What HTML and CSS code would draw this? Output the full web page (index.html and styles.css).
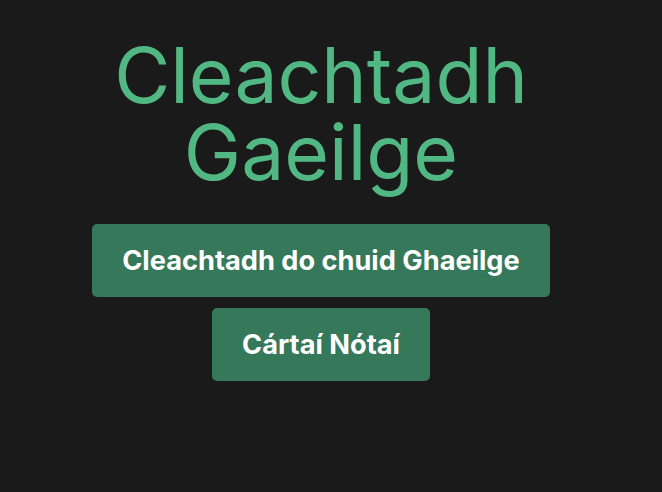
FILE: index.html
```html
<!DOCTYPE html>
<html lang="ga">
<head>
<meta charset="utf-8">
<title>Cleachtadh Gaeilge</title>
<link rel="stylesheet" href="styles.css">
</head>
<body>
<main class="app">
  <h1 class="title">Cleachtadh<br>Gaeilge</h1>
  <div class="actions">
    <button class="btn">Cleachtadh do chuid Ghaeilge</button>
    <button class="btn">Cártaí Nótaí</button>
  </div>
</main>
</body>
</html>
```

FILE: styles.css
```css
html, body {
  margin: 0;
  padding: 0;
  background: #1a1a1a;
  height: 100%;
}
.app {
  width: 642px;
  display: flex;
  flex-direction: column;
  align-items: center;
  font-family: Inter, "Noto Sans", sans-serif;
  padding-top: 38px;
}
.title {
  margin: 0;
  font-size: 76.8px;
  font-weight: 400;
  line-height: 1;
  color: #52b883;
  text-align: center;
}
.actions {
  margin-top: 32px;
  display: flex;
  flex-direction: column;
  align-items: center;
  gap: 11px;
}
.btn {
  font-family: Inter, "Noto Sans", sans-serif;
  font-size: 27.2px;
  font-weight: 700;
  color: #ffffff;
  background: #36785a;
  border: none;
  border-radius: 5px;
  padding: 20px 30px;
  line-height: 33px;
}
```
